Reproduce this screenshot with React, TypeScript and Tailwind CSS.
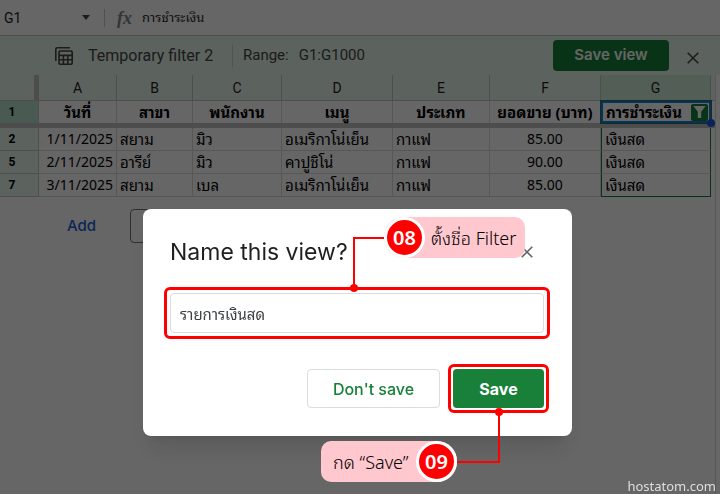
import { useState } from 'react';
import type { ReactNode } from 'react';

interface Sale {
  row: number;
  date: string;
  branch: string;
  staff: string;
  menu: string;
  type: string;
  total: string;
  payment: string;
}

const columns = ['A', 'B', 'C', 'D', 'E', 'F', 'G'];
const titles = ['วันที่', 'สาขา', 'พนักงาน', 'เมนู', 'ประเภท', 'ยอดขาย (บาท)'];

const sales: Sale[] = [
  { row: 2, date: '1/11/2025', branch: 'สยาม', staff: 'มิว', menu: 'อเมริกาโน่เย็น', type: 'กาแฟ', total: '85.00', payment: 'เงินสด' },
  { row: 5, date: '2/11/2025', branch: 'อารีย์', staff: 'มิว', menu: 'คาปูชิโน่', type: 'กาแฟ', total: '90.00', payment: 'เงินสด' },
  { row: 7, date: '3/11/2025', branch: 'สยาม', staff: 'เบล', menu: 'อเมริกาโน่เย็น', type: 'กาแฟ', total: '85.00', payment: 'เงินสด' },
];

const cell = 'h-[23px] border-r border-b border-[#d9d9d9] p-0 px-[3px] leading-5 whitespace-nowrap';

function CloseIcon() {
  return (
    <svg viewBox="0 0 12 12" className="h-3 w-3" fill="none" stroke="currentColor" strokeWidth="1.6">
      <path d="M.7.7l10.6 10.6M11.3.7L.7 11.3" />
    </svg>
  );
}

function FilterViewIcon() {
  return (
    <svg viewBox="0 0 18 18" className="h-[18px] w-[18px]" fill="none" stroke="currentColor" strokeWidth="1.6">
      <path d="M.8 14V2.2Q.8.8 2.2.8H15" />
      <rect x="4" y="4" width="13.2" height="13.2" rx="1.2" />
      <path d="M4 8.4h13.2M4 12.8h13.2M8.4 8.4v8.8M12.8 8.4v8.8" />
    </svg>
  );
}

function StepBadge({ children }: { children: ReactNode }) {
  return (
    <span className="flex h-[41px] w-[41px] shrink-0 items-center justify-center rounded-full border-3 border-white bg-[#ff0000] text-xl font-semibold text-white">
      {children}
    </span>
  );
}

function Sheet() {
  return (
    <table className="w-full table-fixed border-separate border-spacing-0 text-[15px] text-black">
      <colgroup>
        <col className="w-[39px]" />
        <col className="w-[78px]" />
        <col className="w-[76px]" />
        <col className="w-[89px]" />
        <col className="w-[111px]" />
        <col className="w-[97px]" />
        <col className="w-[111px]" />
        <col className="w-[110px]" />
        <col />
      </colgroup>
      <thead>
        <tr className="bg-[#e6f4ea] font-[Roboto] text-sm text-[#1f1f1f]">
          <th className="h-[26px] border-r-5 border-b border-r-[#c0c0c0] border-b-[#c0c6c2] p-0" />
          {columns.map((c) => (
            <th
              key={c}
              className={`h-[26px] border-r border-b border-[#c0c6c2] p-0 font-normal ${c === 'G' ? 'bg-[#ceead6]' : ''}`}
            >
              {c}
            </th>
          ))}
          <th className="h-[26px] border-b border-[#c0c6c2] p-0" />
        </tr>
        <tr>
          <th className="h-[22px] border-r border-[#c0c6c2] bg-[#b7e1cd] p-0 pr-3.5 font-[Roboto] text-xs leading-5">1</th>
          {titles.map((t) => (
            <th key={t} className="h-[22px] border-r border-[#d9d9d9] p-0 leading-5 font-bold whitespace-nowrap">{t}</th>
          ))}
          <th className="relative h-[22px] border-2 border-[#1a73e8] p-0 leading-[18px] whitespace-nowrap outline outline-[#188038]">
            <span className="flex items-center justify-between pr-px pl-[3px]">
              การชำระเงิน
              <button type="button" aria-label="Filter" className="flex h-[17px] w-[17px] items-center justify-center rounded-xs bg-[#188038] text-white">
                <svg viewBox="0 0 13 12" className="h-3 w-[13px]" fill="currentColor">
                  <path d="M.4 0h12.2L8.2 5.8V12H4.8V5.8z" />
                </svg>
              </button>
            </span>
            <span className="absolute -right-1.5 -bottom-1.5 h-2 w-2 rounded-full bg-[#1a56db]" />
          </th>
          <td />
        </tr>
        <tr>
          <td colSpan={9} className="h-[5px] bg-[#c0c0c0] p-0" />
        </tr>
      </thead>
      <tbody>
        {sales.map((s) => (
          <tr key={s.row}>
            <th className="h-[23px] border-r border-b border-[#c0c6c2] bg-[#e6f4ea] p-0 pr-3.5 font-[Roboto] text-xs leading-5">{s.row}</th>
            <td className={`${cell} text-right text-sm`}>{s.date}</td>
            <td className={cell}>{s.branch}</td>
            <td className={cell}>{s.staff}</td>
            <td className={cell}>{s.menu}</td>
            <td className={cell}>{s.type}</td>
            <td className={`${cell} text-center text-sm`}>{s.total}</td>
            <td className={`h-[23px] border-x border-b border-x-[#188038] p-0 px-[3px] leading-5 ${s.row === 7 ? 'border-b-[#188038]' : 'border-b-[#d9d9d9]'}`}>
              {s.payment}
            </td>
            <td />
          </tr>
        ))}
      </tbody>
    </table>
  );
}

export default function App() {
  const [name, setName] = useState('รายการเงินสด');

  return (
    <div className="flex min-h-screen flex-col overflow-hidden bg-white font-['Noto_Sans','Noto_Sans_Thai_Looped','Noto_Looped_Thai','Loma','Waree','Garuda',sans-serif]">
      {/* Formula bar */}
      <div className="flex h-9 items-center border-b border-[#c0c6c2] pl-1 text-[#1f1f1f]">
        <span className="w-[78px] font-[Roboto] text-sm">G1</span>
        <svg viewBox="0 0 8 5" className="h-[5px] w-2" fill="#444746">
          <path d="M0 0h8L4 5z" />
        </svg>
        <span className="ml-3.5 h-[18px] w-px bg-[#c7c7c7]" />
        <i className="ml-3 w-[25px] font-['Liberation_Serif',serif] text-lg font-bold text-[#80868b]">fx</i>
        <span className="text-[13px]">การชำระเงิน</span>
      </div>

      {/* Temporary filter bar */}
      <div className="flex h-[39px] items-center bg-[#e6f4ea] pl-[55px] font-[Roboto] text-[15px] text-[#444746]">
        <FilterViewIcon />
        <span className="ml-[15px] w-36 text-base">Temporary filter 2</span>
        <span className="h-[22px] w-px bg-[#c7d5cc]" />
        <span className="ml-2.5">Range:</span>
        <span className="ml-2.5">G1:G1000</span>
        <button type="button" className="mr-[18px] ml-auto h-[31px] w-[116px] rounded bg-[#188038] font-['Inter',sans-serif] font-semibold text-white">
          Save view
        </button>
        <button type="button" aria-label="Close filter" className="mt-1 mr-[21px]">
          <CloseIcon />
        </button>
      </div>

      <div className="mr-1 flex-1 border-r border-[#d9d9d9]">
        <Sheet />

        {/* Add rows */}
        <div className="mt-3 flex items-center pl-[67px]">
          <button type="button" className="w-[63px] text-left font-['Inter',sans-serif] text-[15px] font-medium text-[#1a62d6]">
            Add
          </button>
          <input type="text" aria-label="Rows to add" className="h-[34px] w-20 rounded border border-[#747775]" />
        </div>
      </div>

      <div className="fixed inset-0 flex items-start justify-center bg-black/60 pt-[209px] pr-[5px]">
        <div role="dialog" aria-label="Name this view" className="relative w-[429px] rounded-lg bg-white pt-[27px] pr-7 pb-7 pl-[27px] shadow-xl">
          <div className="flex h-8 items-center justify-between pr-[11px] text-[#5f6368]">
            <h2 className="font-['Inter',sans-serif] text-[23px] text-[#1f1f1f]">Name this view?</h2>
            <button type="button" aria-label="Close">
              <CloseIcon />
            </button>
          </div>

          <div className="relative mt-[25px]">
            <input
              type="text"
              aria-label="View name"
              value={name}
              onChange={(e) => setName(e.target.value)}
              className="block h-10 w-full rounded border border-[#dadce0] px-[9px] text-[15px] text-[#3c4043] outline-none"
            />
            <span className="pointer-events-none absolute -inset-1.5 rounded-md border-3 border-[#ff0000]" />
          </div>

          <div className="mt-9 flex justify-end gap-[13px] font-['Inter',sans-serif] text-base">
            <button type="button" className="h-[39px] w-[133px] rounded border border-[#dadce0] font-medium text-[#188038]">
              Don't save
            </button>
            <div className="relative">
              <button type="button" className="h-[39px] w-[91px] rounded bg-[#188038] font-bold text-white">
                Save
              </button>
              <span className="pointer-events-none absolute -inset-[5px] rounded-md border-3 border-[#ff0000]" />
            </div>
          </div>

          {/* Step 08 */}
          <div className="absolute top-7 left-[210px] h-[51px] w-8 border-t-2 border-l-2 border-[#ff0000]" />
          <div className="absolute top-[75px] left-[207px] h-2 w-2 rounded-full bg-[#ff0000]" />
          <div className="absolute top-2 left-[241px] flex h-[41px] w-[141px] items-center rounded-l-[20px] rounded-r-[10px] bg-[#ffc7ce] text-lg font-light text-black">
            <StepBadge>08</StepBadge>
            <span className="ml-1.5 whitespace-nowrap">ตั้งชื่อ Filter</span>
          </div>

          {/* Step 09 */}
          <div className="absolute top-[203px] left-[313px] h-[51px] w-11 border-r-2 border-b-2 border-[#ff0000]" />
          <div className="absolute top-[199px] left-[352px] h-2 w-2 rounded-full bg-[#ff0000]" />
          <div className="absolute top-[232px] left-[178px] flex h-[41px] w-[136px] items-center justify-between rounded-l-[10px] rounded-r-[20px] bg-[#ffc7ce] pl-3 text-lg font-light text-black">
            <span className="whitespace-nowrap">กด “Save”</span>
            <StepBadge>09</StepBadge>
          </div>
        </div>
      </div>

      <span className="fixed right-1 bottom-0 text-[13px] leading-4 text-[#dedede]">hostatom.com</span>
    </div>
  );
}
